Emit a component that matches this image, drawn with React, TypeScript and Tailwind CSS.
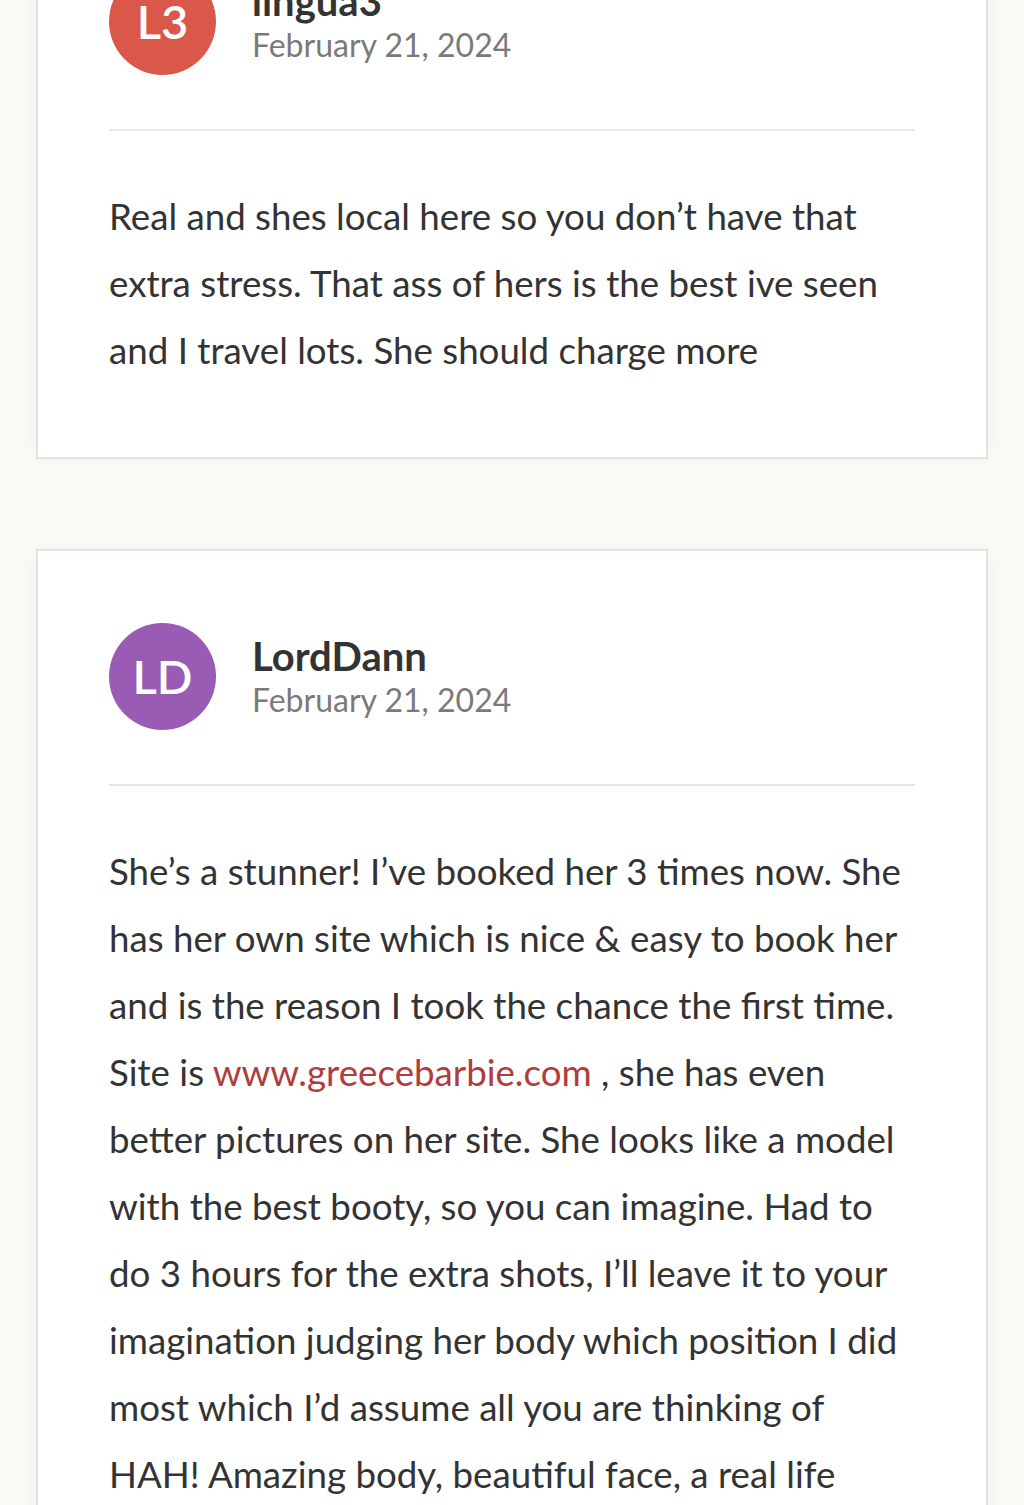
const COMMENTS = [
  {
    initials: "L3",
    name: "lingua3",
    date: "February 21, 2024",
    color: "bg-[#d9584a]",
    body: (
      <>Real and shes local here so you don’t have that extra stress. That ass of hers is the best ive seen and I travel lots. She should charge more</>
    ),
  },
  {
    initials: "LD",
    name: "LordDann",
    date: "February 21, 2024",
    color: "bg-[#9a5bb4]",
    body: (
      <>
        She’s a stunner! I’ve booked her 3 times now. She has her own site which is nice &amp; easy to book her and is the reason I took the chance the first time. Site is{" "}
        <a href="#" className="text-[#b23b3b]">www.greecebarbie.com</a> , she has even better pictures on her site. She looks like a model with the best booty, so you can imagine. Had to do 3 hours for the extra shots, I’ll leave it to your imagination judging her body which position I did most which I’d assume all you are thinking of HAH! Amazing body, beautiful face, a real life
      </>
    ),
  },
];

function Comment({ c }: { c: (typeof COMMENTS)[number] }) {
  return (
    <div className="border-2 border-[#e4e4e1] bg-white px-[71px] pt-[72px] pb-[73px] shadow-[0_0_14px_rgba(0,0,0,0.035)]">
      <div className="flex items-center gap-[36px] pb-[54px] border-b-2 border-[#e6e6e4]">
        <div
          className={`flex h-[107px] w-[107px] shrink-0 items-center justify-center rounded-full ${c.color} text-[47px] font-semibold text-white`}
        >
          {c.initials}
        </div>
        <div className="flex flex-col">
          <span className="text-[40px] font-bold leading-[46px] text-[#333]">{c.name}</span>
          <span className="text-[32px] leading-[42px] text-[#7a7a7a]">{c.date}</span>
        </div>
      </div>
      <p className="pt-[52px] text-[36.7px] leading-[67px] text-[#333]">{c.body}</p>
    </div>
  );
}

export default function App() {
  return (
    <div
      className="h-[1505px] overflow-hidden bg-[#faf9f5] px-9"
      style={{ fontFamily: "Lato, 'Open Sans', sans-serif" }}
    >
      <div className="-mt-[106px] flex flex-col gap-[90px]">
        {COMMENTS.map((c) => (
          <Comment key={c.name} c={c} />
        ))}
      </div>
    </div>
  );
}
